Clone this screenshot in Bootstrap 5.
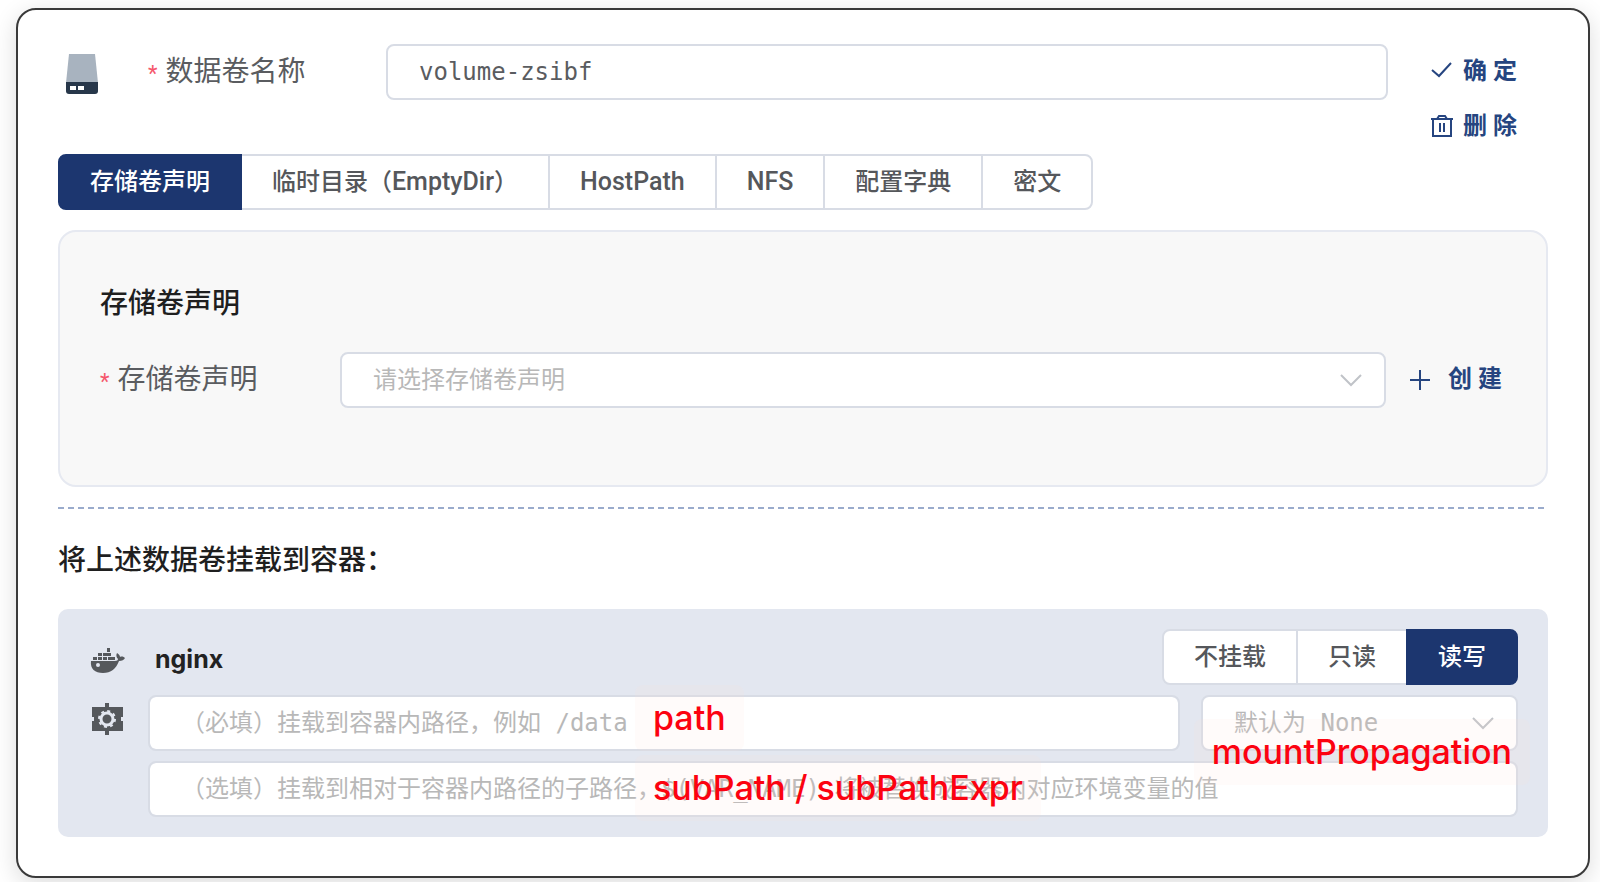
<!DOCTYPE html>
<html lang="zh-CN">
<head>
<meta charset="utf-8">
<meta name="viewport" content="width=device-width, initial-scale=1">
<title>数据卷</title>
<link href="https://cdn.jsdelivr.net/npm/bootstrap@5.3.0/dist/css/bootstrap.min.css" rel="stylesheet">
<style>
  :root {
    --navy: #1c366f;
    --line: #d8dce5;
    --ink: #5a5c60;
  }
  body {
    font-family: Roboto, "Noto Sans CJK SC", sans-serif;
    font-size: 24px;
    line-height: 36px;
    color: var(--ink);
    background: #fff;
    overflow-x: hidden;
  }
  .volume-card {
    margin: 8px 10px 5px 16px;
    padding: 34px 40px 39px;
    border: 2px solid #3a3a3a;
    border-radius: 20px;
    background: #fff;
    box-shadow: 0 6px 24px rgba(0, 0, 0, .14);
  }
  .icon-cell { flex: 0 0 90px; padding-left: 7px; height: 60px; }
  .field-label { flex: 0 0 240px; font-size: 28px; line-height: 56px; }
  .name-label { flex-basis: 238px; }
  .field-label::before { content: "*"; color: #f5576c; font-size: 22px; margin-right: 8px; }
  .form-control, .form-select {
    height: 56px;
    padding: 0 31px;
    border: 2px solid var(--line);
    border-radius: 8px;
    font-family: "DejaVu Sans Mono", "Noto Sans CJK SC", monospace;
    font-size: 24px;
    line-height: 36px;
    color: var(--ink);
  }
  .form-control::placeholder { color: #b8b8b8; }
  .form-select {
    color: #b8b8b8;
    background-color: #fff;
    background-image: url("data:image/svg+xml,%3Csvg xmlns='http://www.w3.org/2000/svg' viewBox='0 0 22 14'%3E%3Cpath d='M1 2l10 10L21 2' fill='none' stroke='%23c0c3c8' stroke-width='2'/%3E%3C/svg%3E");
    background-size: 22px 14px;
    background-position: right 22px center;
  }
  .action-btn {
    padding: 0;
    border: 0;
    font-size: 24px;
    font-weight: 700;
    line-height: 55px;
    color: #264580;
  }
  .actions { flex: 0 0 160px; padding-left: 43px; }
  .actions .action-btn { column-gap: 10px; }
  .create-cell { flex: 0 0 120px; padding-left: 23px; }
  .create-cell .action-btn { column-gap: 17px; }
  .segments .btn {
    --bs-btn-color: #55575b;
    --bs-btn-bg: #fff;
    --bs-btn-border-color: var(--line);
    --bs-btn-hover-bg: #f4f6fa;
    --bs-btn-hover-color: var(--navy);
    --bs-btn-hover-border-color: var(--line);
    --bs-btn-active-bg: var(--navy);
    --bs-btn-active-color: #fff;
    --bs-btn-active-border-color: var(--navy);
    padding: 8px 30px;
    border-width: 2px;
    border-radius: 8px;
    font-size: 24px;
    font-weight: 500;
    line-height: 36px;
  }
  .segments.btn-group > .btn:not(:first-of-type) { margin-left: -2px; }
  .segments .latin { font-size: 25px; line-height: 1; }
  .claim-panel {
    margin-top: 20px;
    padding: 50px 40px 75px;
    border: 2px solid #e6e9f1;
    border-radius: 18px;
    background: #f8f8f8;
  }
  .claim-row { margin-top: 26px; }
  .section-title { margin: 0; font-size: 28px; font-weight: 500; line-height: 44px; color: #1f1f1f; }
  .dash-line {
    height: 2px;
    margin: 20px 0 30px;
    border: 0;
    opacity: 1;
    background: repeating-linear-gradient(90deg, #9aabcc 0 6px, transparent 6px 10px);
  }
  .mount-box {
    margin-top: 26px;
    padding: 20px 30px 20px 32px;
    border-radius: 10px;
    background: #e3e7f0;
  }
  .stack-gap { gap: 10px; }
  .field-gap { gap: 21px; }
  .mount-icon { flex: 0 0 58px; height: 56px; }
  .container-name { padding: 4px 0 0 7px; font-family: Inter, sans-serif; font-size: 25px; font-weight: 700; color: #222; }
  .propagation { flex: 0 0 317px; }
  /* Red annotations lying over the fields */
  .note {
    position: absolute;
    z-index: 5;
    height: 66px;
    padding: 0 18px;
    border-radius: 8px;
    background: rgba(255, 225, 215, .12);
    font-family: Inter, sans-serif;
    font-size: 34px;
    font-weight: 500;
    line-height: 66px;
    color: #fc0210;
    white-space: nowrap;
    pointer-events: none;
  }
  .note-path { left: 487px; top: -10px; }
  .note-sub { left: 487px; top: -6px; }
  .note-prop { right: -12px; top: 24px; }
</style>
</head>
<body>
<main class="volume-card">
  <form>
    <div class="d-flex align-items-start">
      <div class="icon-cell d-flex align-items-center">
        <svg width="34" height="42" viewBox="0 0 34 42" aria-hidden="true">
          <path d="M4 1h26l3 29H1z" fill="#a8b3bf"/>
          <path d="M1 29h32v9a3 3 0 0 1-3 3H4a3 3 0 0 1-3-3z" fill="#27374a"/>
          <path d="M5 33h6v4H5zM13 33h6v4h-6z" fill="#fff"/>
        </svg>
      </div>
      <label class="field-label name-label" for="volumeName">数据卷名称</label>
      <input class="form-control flex-fill w-auto" id="volumeName" type="text" value="volume-zsibf">
      <div class="actions d-flex flex-column align-items-start">
        <button class="btn action-btn d-flex align-items-center" type="button">
          <svg width="22" height="20" viewBox="0 0 22 20" fill="none" stroke="currentColor" stroke-width="2" aria-hidden="true"><path d="M1 8l7 6L20 1"/></svg>
          <span>确 定</span>
        </button>
        <button class="btn action-btn d-flex align-items-center" type="button">
          <svg width="22" height="24" viewBox="0 0 22 24" fill="none" stroke="currentColor" stroke-width="2" aria-hidden="true"><path d="M0 4h22M2 4v17h18V4M6 4l2-3h6l2 3M9 8v9M13 8v9"/></svg>
          <span>删 除</span>
        </button>
      </div>
    </div>

    <div class="btn-group segments d-inline-flex align-top" role="group" aria-label="数据卷类型">
      <input class="btn-check" type="radio" name="kind" id="kindPvc" checked><label class="btn" for="kindPvc">存储卷声明</label>
      <input class="btn-check" type="radio" name="kind" id="kindEmpty"><label class="btn" for="kindEmpty">临时目录（<span class="latin">EmptyDir</span>）</label>
      <input class="btn-check" type="radio" name="kind" id="kindHost"><label class="btn" for="kindHost"><span class="latin">HostPath</span></label>
      <input class="btn-check" type="radio" name="kind" id="kindNfs"><label class="btn" for="kindNfs"><span class="latin">NFS</span></label>
      <input class="btn-check" type="radio" name="kind" id="kindConfig"><label class="btn" for="kindConfig">配置字典</label>
      <input class="btn-check" type="radio" name="kind" id="kindSecret"><label class="btn" for="kindSecret">密文</label>
    </div>

    <section class="claim-panel">
      <h2 class="section-title">存储卷声明</h2>
      <div class="claim-row d-flex">
        <label class="field-label" for="claim">存储卷声明</label>
        <select class="form-select flex-fill w-auto" id="claim"><option>请选择存储卷声明</option></select>
        <div class="create-cell">
          <button class="btn action-btn d-flex align-items-center" type="button">
            <svg width="22" height="22" viewBox="0 0 22 22" fill="none" stroke="currentColor" stroke-width="2" aria-hidden="true"><path d="M1 11h20M11 1v20"/></svg>
            <span>创 建</span>
          </button>
        </div>
      </div>
    </section>

    <hr class="dash-line">
    <h2 class="section-title">将上述数据卷挂载到容器：</h2>

    <section class="mount-box d-flex flex-column stack-gap">
      <div class="d-flex align-items-center">
        <div class="mount-icon d-flex align-items-center pt-2">
          <svg width="36" height="28" viewBox="0 0 36 28" fill="#55585c" aria-hidden="true">
            <path d="M1 14h24c2 0 3-1 3-2-2-2-2-4-1-6 2 1 3 3 3 4 2-1 4 0 5 1-1 2-3 3-6 3-3 8-8 12-16 12C5 26 0 22 1 14z"/>
            <path d="M3 10h4v3H3zM8 10h4v3H8zM13 10h4v3h-4zM18 10h4v3h-4zM8 6h4v3H8zM13 6h4v3h-4zM17 6h4v3h-4zM17 1h3v4h-3zM22 10h3v3h-3z"/>
            <circle cx="8" cy="18" r="2" fill="#e3e7f0"/>
          </svg>
        </div>
        <div class="container-name flex-fill">nginx</div>
        <div class="btn-group segments" role="group" aria-label="挂载方式">
          <input class="btn-check" type="radio" name="mode" id="modeNone"><label class="btn" for="modeNone">不挂载</label>
          <input class="btn-check" type="radio" name="mode" id="modeRead"><label class="btn" for="modeRead">只读</label>
          <input class="btn-check" type="radio" name="mode" id="modeWrite" checked><label class="btn" for="modeWrite">读写</label>
        </div>
      </div>
      <div class="d-flex">
        <div class="mount-icon">
          <svg width="34" height="48" viewBox="0 0 34 48" aria-hidden="true">
            <path d="M2 12h13V8h4v4h14v10h-2v4h2v10H19v4h-4v-4H2V26h2v-4H2z" fill="#55585c"/>
            <circle cx="17" cy="24" r="6" fill="none" stroke="#e3e7f0" stroke-width="3"/>
            <circle cx="17" cy="24" r="8" fill="none" stroke="#e3e7f0" stroke-width="2" stroke-dasharray="3 3.28"/>
          </svg>
        </div>
        <div class="d-flex flex-column flex-fill stack-gap">
          <div class="d-flex field-gap">
            <div class="position-relative flex-fill">
              <input class="form-control" type="text" aria-label="挂载路径" placeholder="（必填）挂载到容器内路径，例如 /data">
              <span class="note note-path">path</span>
            </div>
            <div class="position-relative propagation">
              <select class="form-select" aria-label="挂载传播"><option>默认为 None</option></select>
              <span class="note note-prop">mountPropagation</span>
            </div>
          </div>
          <div class="position-relative">
            <input class="form-control" type="text" aria-label="子路径" placeholder="（选填）挂载到相对于容器内路径的子路径，$(VAR_NAME) 将被替换成容器内对应环境变量的值">
            <span class="note note-sub">subPath / subPathExpr</span>
          </div>
        </div>
      </div>
    </section>
  </form>
</main>
<script src="https://cdn.jsdelivr.net/npm/bootstrap@5.3.0/dist/js/bootstrap.bundle.min.js"></script>
</body>
</html>
